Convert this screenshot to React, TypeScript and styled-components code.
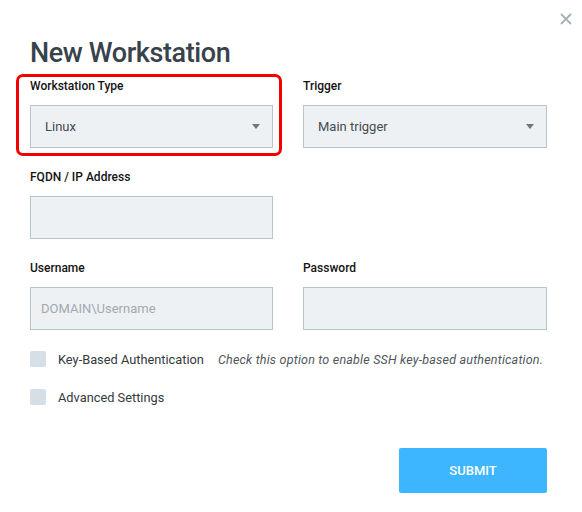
import * as React from 'react';
import styled, { createGlobalStyle } from 'styled-components';

const GlobalStyle = createGlobalStyle`
  body {
    margin: 0;
    background: #ffffff;
    font-family: 'Roboto', 'Liberation Sans', sans-serif;
  }
`;

const Modal = styled.div`
  position: relative;
  width: 582px;
  height: 512px;
  box-sizing: border-box;
  padding: 37px 35px 0 30px;
  background: #ffffff;
`;

const CloseButton = styled.div`
  position: absolute;
  top: 13px;
  right: 10px;
  width: 12px;
  height: 12px;
  cursor: pointer;
  display: flex;
`;

const Title = styled.h1`
  margin: 0 0 9px;
  font-size: 27px;
  line-height: 32px;
  font-weight: 500;
  letter-spacing: -0.4px;
  color: #37424a;
`;

const FieldGrid = styled.div`
  display: grid;
  grid-template-columns: 243px 244px;
  column-gap: 30px;
  row-gap: 21px;
`;

const Field = styled.div<{ $highlight?: boolean }>`
  position: relative;
  display: flex;
  flex-direction: column;
  gap: 11px;

  ${p =>
    p.$highlight &&
    `
    &::after {
      content: '';
      position: absolute;
      top: -4px;
      left: -14px;
      right: -9px;
      bottom: -8px;
      border: 3px solid #f20000;
      border-radius: 7px;
      pointer-events: none;
    }
  `}
`;

const Label = styled.label`
  font-size: 12px;
  line-height: 16px;
  font-weight: 500;
  color: #141414;
`;

const InputBox = styled.div<{ $placeholder?: boolean }>`
  height: 43px;
  box-sizing: border-box;
  display: flex;
  align-items: center;
  padding: 0 10px;
  background: #eef1f4;
  border: 1px solid #b9c5cc;
  font-size: 13px;
  color: ${p => (p.$placeholder ? '#a3aaaf' : '#454b50')};
`;

const SelectBox = styled(InputBox)`
  justify-content: space-between;
  padding: 0 12px 0 14px;
  cursor: pointer;
`;

const Caret = styled.span`
  width: 0;
  height: 0;
  border-left: 4.5px solid transparent;
  border-right: 4.5px solid transparent;
  border-top: 5px solid #707579;
`;

const Options = styled.div`
  display: flex;
  flex-direction: column;
  gap: 22px;
  margin-top: 21px;
`;

const CheckRow = styled.div`
  display: flex;
  align-items: center;
  height: 16px;
`;

const CheckBox = styled.span`
  width: 16px;
  height: 16px;
  border-radius: 2px;
  background: #d6dfe5;
  margin-right: 12px;
`;

const CheckLabel = styled.span`
  font-size: 12.8px;
  color: #34393d;
`;

const Hint = styled.span`
  margin-left: 14px;
  font-size: 12.5px;
  letter-spacing: 0.2px;
  font-style: italic;
  color: #50575c;
`;

const Footer = styled.div`
  display: flex;
  justify-content: flex-end;
  margin-top: 43px;
`;

const SubmitButton = styled.button`
  width: 148px;
  height: 45px;
  border: none;
  border-radius: 2px;
  background: #3db6ff;
  color: #ffffff;
  font-family: inherit;
  font-size: 13px;
  font-weight: 500;
  cursor: pointer;
`;

const App: React.FC = () => {
  return (
    <>
      <GlobalStyle />
      <Modal>
        <CloseButton>
          <svg width="12" height="12" viewBox="0 0 12 12">
            <path d="M1 1L11 11M11 1L1 11" stroke="#a6b0b6" strokeWidth="1.8" />
          </svg>
        </CloseButton>
        <Title>New Workstation</Title>
        <FieldGrid>
          <Field $highlight>
            <Label>Workstation Type</Label>
            <SelectBox>
              Linux
              <Caret />
            </SelectBox>
          </Field>
          <Field>
            <Label>Trigger</Label>
            <SelectBox>
              Main trigger
              <Caret />
            </SelectBox>
          </Field>
          <Field>
            <Label>FQDN / IP Address</Label>
            <InputBox />
          </Field>
          <div />
          <Field>
            <Label>Username</Label>
            <InputBox $placeholder>DOMAIN\Username</InputBox>
          </Field>
          <Field>
            <Label>Password</Label>
            <InputBox />
          </Field>
        </FieldGrid>
        <Options>
          <CheckRow>
            <CheckBox />
            <CheckLabel>Key-Based Authentication</CheckLabel>
            <Hint>Check this option to enable SSH key-based authentication.</Hint>
          </CheckRow>
          <CheckRow>
            <CheckBox />
            <CheckLabel>Advanced Settings</CheckLabel>
          </CheckRow>
        </Options>
        <Footer>
          <SubmitButton>SUBMIT</SubmitButton>
        </Footer>
      </Modal>
    </>
  );
};

export default App;
